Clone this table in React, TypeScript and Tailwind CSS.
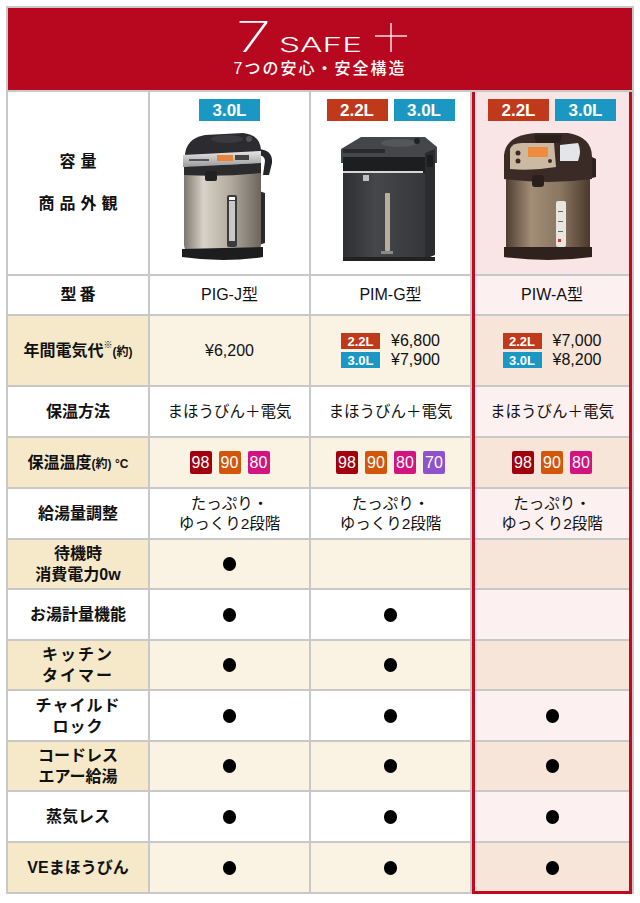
import * as React from "react"

type Tone = "w" | "b"

const Badge = ({ size, small }: { size: "2.2L" | "3.0L"; small?: boolean }) => (
  <span
    className={
      (size === "2.2L" ? "bg-[#c0391b] " : "bg-[#1a97c2] ") +
      (small
        ? "w-[39px] h-[16px] text-[13px]"
        : "w-[61px] h-[22px] text-[17px]") +
      " inline-flex items-center justify-center font-bold text-white leading-none"
    }
  >
    {size}
  </span>
)

const temps: Record<string, string> = {
  "98": "bg-[#a1000f]",
  "90": "bg-[#d2570a]",
  "80": "bg-[#d3137f]",
  "70": "bg-[#8d52cc]",
}

const Temps = ({ list }: { list: string[] }) => (
  <div className="flex gap-[7px]">
    {list.map((t) => (
      <span
        key={t}
        className={
          temps[t] +
          " w-[22px] h-[23px] rounded-[2px] flex items-center justify-center text-white text-[16px] leading-none"
        }
      >
        {t}
      </span>
    ))}
  </div>
)

const Dot = () => <span className="w-[13px] h-[14px] rounded-full bg-black" />

const Price = ({ a, b }: { a: string; b: string }) => (
  <div className="flex flex-col gap-[3px]">
    <div className="flex items-center gap-[11px]">
      <Badge size="2.2L" small />
      <span className="text-[16px] leading-none">{a}</span>
    </div>
    <div className="flex items-center gap-[11px]">
      <Badge size="3.0L" small />
      <span className="text-[16px] leading-none">{b}</span>
    </div>
  </div>
)

const Hot = () => (
  <div className="text-[15.5px] leading-[20px] text-center">
    たっぷり・
    <br />
    ゆっくり2段階
  </div>
)

const PotJ = () => (
  <svg width="100" height="132" viewBox="0 0 100 132">
    <defs>
      <linearGradient id="steel" x1="0" x2="1" y1="0" y2="0">
        <stop offset="0" stopColor="#7d766c" />
        <stop offset="0.25" stopColor="#d8d2c8" />
        <stop offset="0.6" stopColor="#b3ab9f" />
        <stop offset="1" stopColor="#6c655c" />
      </linearGradient>
      <linearGradient id="panel" x1="0" x2="0" y1="0" y2="1">
        <stop offset="0" stopColor="#e6e6e6" />
        <stop offset="1" stopColor="#9a9a9a" />
      </linearGradient>
    </defs>
    <path d="M80 18 Q96 18 95 32 L92 44 L86 44 L88 30 Q88 24 80 24 Z" fill="#26262a" />
    <path d="M82 60 L88 62 L88 112 L82 114 Z" fill="#2a2a2c" />
    <rect x="7" y="34" width="77" height="88" rx="8" fill="url(#steel)" />
    <path d="M8 30 Q6 8 28 4 L66 2 Q84 4 84 20 L84 30 Z" fill="#2c2c30" />
    <ellipse cx="50" cy="8" rx="16" ry="4" fill="#3a3a3f" />
    <circle cx="72" cy="8" r="3" fill="#555" />
    <path d="M6 24 L84 20 L84 32 L6 36 Z" fill="url(#panel)" />
    <rect x="40" y="24" width="16" height="6" fill="#e8843a" />
    <rect x="58" y="24" width="14" height="5" fill="#444" />
    <rect x="12" y="28" width="20" height="2" fill="#555" />
    <path d="M7 36 L84 32 L84 42 Q46 46 7 44 Z" fill="#2b2b2d" />
    <rect x="28" y="40" width="12" height="10" rx="2" fill="#222" />
    <rect x="50" y="64" width="10" height="52" rx="2" fill="#3b3b3d" />
    <rect x="52" y="70" width="6" height="40" fill="#c8c8c8" />
    <rect x="52" y="66" width="6" height="3" fill="#fff" />
    <path d="M5 118 L86 116 L86 126 Q46 132 5 126 Z" fill="#1d1d1f" />
  </svg>
)

const PotG = () => (
  <svg width="100" height="132" viewBox="0 0 100 132">
    <defs>
      <linearGradient id="dark" x1="0" x2="1" y1="0" y2="0">
        <stop offset="0" stopColor="#2e2f32" />
        <stop offset="0.4" stopColor="#46474b" />
        <stop offset="1" stopColor="#36373a" />
      </linearGradient>
    </defs>
    <path d="M2 16 L22 4 L86 4 L98 14 L98 30 L2 30 Z" fill="#45464a" />
    <ellipse cx="60" cy="10" rx="18" ry="4" fill="#55565a" />
    <circle cx="78" cy="8" r="3" fill="#222" />
    <rect x="4" y="16" width="42" height="4" fill="#2a2a2c" />
    <rect x="4" y="28" width="82" height="98" fill="url(#dark)" />
    <path d="M86 20 L96 16 L96 122 L86 126 Z" fill="#2b2c2e" />
    <rect x="88" y="22" width="6" height="12" fill="#1d1d1f" />
    <rect x="4" y="24" width="82" height="16" fill="#1d1e20" />
    <rect x="4" y="38" width="80" height="2" fill="#d6d6d6" />
    <rect x="24" y="42" width="6" height="6" fill="#c0c0c0" />
    <rect x="46" y="60" width="5" height="58" rx="1" fill="#b7ae9c" />
    <rect x="42" y="118" width="12" height="3" fill="#8a8a8a" />
    <rect x="4" y="124" width="92" height="4" fill="#222" />
  </svg>
)

const PotA = () => (
  <svg width="100" height="132" viewBox="0 0 100 132">
    <defs>
      <linearGradient id="bronze" x1="0" x2="1" y1="0" y2="0">
        <stop offset="0" stopColor="#4f3e31" />
        <stop offset="0.3" stopColor="#a28d76" />
        <stop offset="0.65" stopColor="#8a7661" />
        <stop offset="1" stopColor="#4a392d" />
      </linearGradient>
    </defs>
    <path d="M90 24 L98 28 L98 46 L90 48 Z" fill="#2e221e" />
    <rect x="8" y="40" width="84" height="82" rx="6" fill="url(#bronze)" />
    <path d="M6 48 L6 24 Q8 4 38 2 L70 2 Q94 6 94 26 L94 48 Q50 54 6 48 Z" fill="#3b2b27" />
    <path d="M36 4 L64 4 L62 12 L38 12 Z" fill="#2a1f1b" />
    <path d="M12 18 Q14 12 24 12 L56 12 L58 36 Q34 40 12 38 Z" fill="#cbb9a2" />
    <rect x="30" y="16" width="20" height="10" fill="#f08a3c" />
    <circle cx="20" cy="22" r="2.5" fill="#3b2b27" />
    <circle cx="20" cy="30" r="2.5" fill="#3b2b27" />
    <circle cx="52" cy="30" r="2" fill="#3b2b27" />
    <path d="M62 14 L80 12 Q84 20 80 30 L62 30 Z" fill="#e4e5e8" />
    <rect x="34" y="44" width="12" height="12" rx="3" fill="#2a1f1b" />
    <rect x="58" y="70" width="10" height="46" rx="2" fill="#e9e6e0" />
    <rect x="60" y="80" width="5" height="1" fill="#666" />
    <rect x="60" y="90" width="5" height="1" fill="#666" />
    <rect x="60" y="100" width="5" height="1" fill="#666" />
    <rect x="60" y="108" width="3" height="3" fill="#d33" />
    <path d="M6 116 L94 116 L94 126 Q50 132 6 126 Z" fill="#2f221d" />
  </svg>
)

type Row = {
  h: number
  tone: Tone
  label: React.ReactNode
  cells: React.ReactNode[]
}

const rows: Row[] = [
  {
    h: 182,
    tone: "w",
    label: (
      <div className="flex flex-col items-center gap-[18px] tracking-[5px] pl-[5px]">
        <span>容量</span>
        <span>商品外観</span>
      </div>
    ),
    cells: [
      <div className="flex flex-col items-center h-full pt-[7px]">
        <Badge size="3.0L" />
        <div className="mt-[10px] -ml-[6px]"><PotJ /></div>
      </div>,
      <div className="flex flex-col items-center h-full pt-[7px]">
        <div className="flex gap-[6px]">
          <Badge size="2.2L" />
          <Badge size="3.0L" />
        </div>
        <div className="mt-[12px] -ml-[4px]"><PotG /></div>
      </div>,
      <div className="flex flex-col items-center h-full pt-[7px]">
        <div className="flex gap-[6px]">
          <Badge size="2.2L" />
          <Badge size="3.0L" />
        </div>
        <div className="mt-[10px] -ml-[8px]"><PotA /></div>
      </div>,
    ],
  },
  {
    h: 38,
    tone: "w",
    label: <span className="tracking-[3px] pl-[3px]">型番</span>,
    cells: [
      <span className="text-[16px]">PIG-J型</span>,
      <span className="text-[16px]">PIM-G型</span>,
      <span className="text-[16px]">PIW-A型</span>,
    ],
  },
  {
    h: 69,
    tone: "b",
    label: (
      <span>
        年間電気代<span className="text-[9px] align-top">※</span>
        <span className="text-[12px]">(約)</span>
      </span>
    ),
    cells: [
      <span className="text-[16px]">¥6,200</span>,
      <Price a="¥6,800" b="¥7,900" />,
      <Price a="¥7,000" b="¥8,200" />,
    ],
  },
  {
    h: 49,
    tone: "w",
    label: <span>保温方法</span>,
    cells: [0, 1, 2].map(() => <span className="text-[15.5px]">まほうびん＋電気</span>),
  },
  {
    h: 49,
    tone: "b",
    label: (
      <span>
        保温温度<span className="text-[12px]">(約) °C</span>
      </span>
    ),
    cells: [
      <Temps list={["98", "90", "80"]} />,
      <Temps list={["98", "90", "80", "70"]} />,
      <Temps list={["98", "90", "80"]} />,
    ],
  },
  { h: 49, tone: "w", label: <span>給湯量調整</span>, cells: [<Hot />, <Hot />, <Hot />] },
  {
    h: 48,
    tone: "b",
    label: (
      <span className="text-center leading-[21px]">
        待機時
        <br />
        消費電力0w
      </span>
    ),
    cells: [<Dot />, null, null],
  },
  { h: 49, tone: "w", label: <span>お湯計量機能</span>, cells: [<Dot />, <Dot />, null] },
  {
    h: 48,
    tone: "b",
    label: (
      <span className="text-center leading-[21px] tracking-[2px]">
        キッチン
        <br />
        タイマー
      </span>
    ),
    cells: [<Dot />, <Dot />, null],
  },
  {
    h: 49,
    tone: "w",
    label: (
      <span className="text-center leading-[21px] tracking-[1px]">
        チャイルド
        <br />
        ロック
      </span>
    ),
    cells: [<Dot />, <Dot />, <Dot />],
  },
  {
    h: 48,
    tone: "b",
    label: (
      <span className="text-center leading-[21px]">
        コードレス
        <br />
        エアー給湯
      </span>
    ),
    cells: [<Dot />, <Dot />, <Dot />],
  },
  { h: 49, tone: "w", label: <span>蒸気レス</span>, cells: [<Dot />, <Dot />, <Dot />] },
  { h: 49, tone: "b", label: <span>VEまほうびん</span>, cells: [<Dot />, <Dot />, <Dot />] },
]

const cellBg = (col: number, tone: Tone, first: boolean) => {
  if (col === 0) return tone === "b" ? "bg-[#f5e9c9]" : "bg-white"
  if (col === 3) {
    if (first) return "bg-[#f9e4e6]"
    return tone === "b" ? "bg-[#f6e5d8]" : "bg-[#fcf0f0]"
  }
  return tone === "b" ? "bg-[#faf2e3]" : "bg-white"
}

export default function App() {
  const widths = ["w-[140px]", "w-[159px]", "w-[159px]", "w-[160px]"]
  return (
    <div className="w-[640px] h-[903px] bg-white pt-[6px] px-[6px] font-['Liberation_Sans','Noto_Sans_CJK_JP',sans-serif] text-[#111]">
      <div className="bg-[#c8c8c8] p-[2px] flex flex-col gap-[2px]">
        {/* header */}
        <div className="h-[82px] bg-[#b8081f] flex flex-col items-center pt-[13px]">
          <svg width="176" height="36" viewBox="0 0 176 36" className="ml-[6px] overflow-visible">
            <text
              x="1"
              y="31"
              fontSize="42"
              fontWeight="200"
              fill="#fff"
              fontFamily="Inter, 'DejaVu Sans', sans-serif"
              textLength="35"
              lengthAdjust="spacingAndGlyphs"
            >
              7
            </text>
            <text
              x="44"
              y="31"
              fontSize="20"
              fontWeight="300"
              fill="#fff"
              fontFamily="Inter, 'DejaVu Sans', sans-serif"
              textLength="83"
              lengthAdjust="spacingAndGlyphs"
            >
              SAFE
            </text>
            <line x1="156" y1="2" x2="156" y2="31" stroke="#fff" strokeWidth="1.3" />
            <line x1="140" y1="15" x2="172" y2="15" stroke="#fff" strokeWidth="1.3" />
          </svg>
          <div className="mt-[3px] text-white text-[16px] font-medium tracking-[2px] leading-[18px]">
            7つの安心・安全構造
          </div>
        </div>

        {/* table */}
        <div className="flex gap-[2px]">
          {[0, 1, 2, 3].map((col) => (
            <div key={col} className={widths[col] + " flex flex-col gap-[2px] relative"}>
              {rows.map((r, i) => (
                <div
                  key={i}
                  style={{ height: r.h }}
                  className={
                    cellBg(col, r.tone, i === 0) +
                    " flex items-center justify-center" +
                    (col === 0 ? " text-[16px] font-bold text-center" : "") +
                    (col > 0 && i === 0 ? " items-start" : "")
                  }
                >
                  {col === 0 ? r.label : r.cells[col - 1]}
                </div>
              ))}
              {col === 3 && (
                <div className="absolute inset-0 -bottom-[2px] border-[3px] border-t-0 border-[#c3091f] pointer-events-none" />
              )}
            </div>
          ))}
        </div>
      </div>
    </div>
  )
}
